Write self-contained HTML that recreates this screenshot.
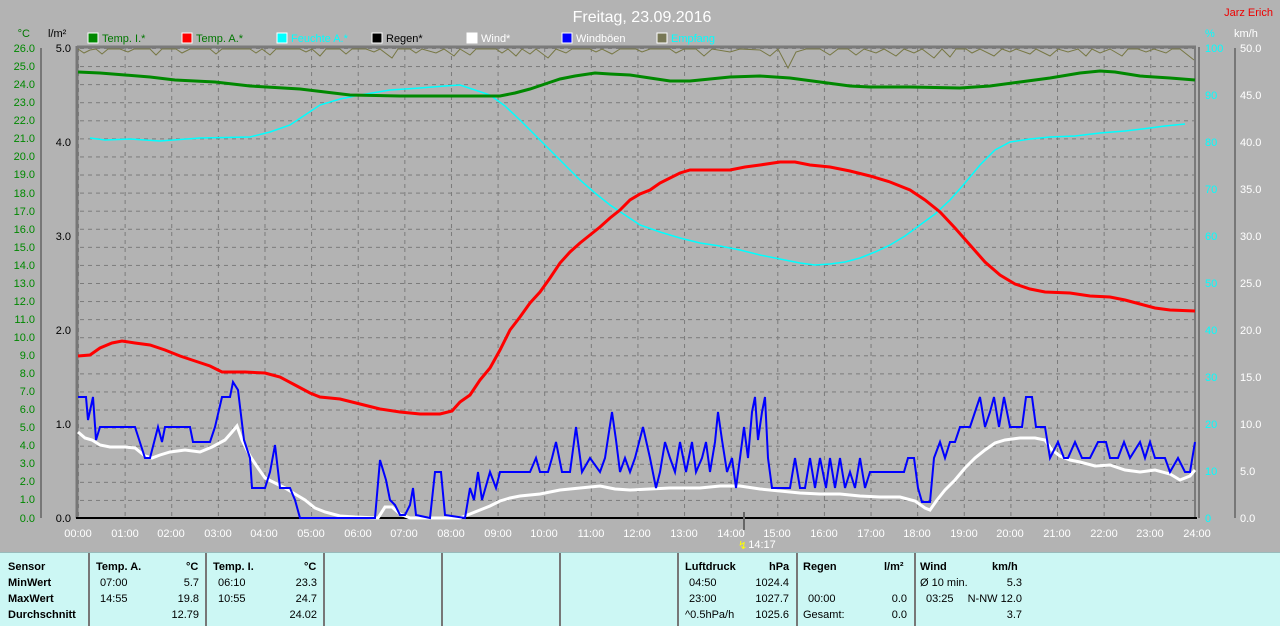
<!DOCTYPE html><html><head><meta charset="utf-8"><style>
body{margin:0;width:1280px;height:625px;background:#b3b3b3;overflow:hidden;font-family:"Liberation Sans",sans-serif;position:relative}
.t{position:absolute;white-space:nowrap}
#tab{position:absolute;left:0;top:552px;width:1280px;height:73px;background:#ccf7f4;border-top:1px solid #9bb;}
#tab .c{position:absolute;top:0;height:73px;border-left:2px solid #777}
#tab span{position:absolute;font-size:11px;color:#000;white-space:nowrap}
#tab b{font-weight:bold}
</style></head><body>
<svg width="1280" height="552" style="position:absolute;left:0;top:0" font-family="Liberation Sans, sans-serif">
<defs>
<pattern id="gh" x="0" y="48" width="1280" height="18.077" patternUnits="userSpaceOnUse"><line x1="0" y1="0.5" x2="1280" y2="0.5" stroke="#7a7a7a" stroke-dasharray="4,4"/></pattern>
<pattern id="gv" x="78" y="0" width="46.62" height="600" patternUnits="userSpaceOnUse"><line x1="0.5" y1="0" x2="0.5" y2="600" stroke="#7a7a7a" stroke-dasharray="4,4"/></pattern>
</defs>
<rect x="78" y="48" width="1117" height="470" fill="url(#gh)"/>
<rect x="78" y="48" width="1117" height="470" fill="url(#gv)"/>
<text x="642" y="22" fill="#fff" font-size="16" text-anchor="middle">Freitag, 23.09.2016</text>
<text x="1273" y="16" fill="#e00" font-size="11" text-anchor="end">Jarz Erich</text>
<g font-size="11">
<text x="30" y="37" fill="#070" text-anchor="end">°C</text>
<text x="48" y="37" fill="#000">l/m²</text>
<text x="1205" y="37" fill="#0ff">%</text>
<text x="1234" y="37" fill="#fff">km/h</text>
<rect x="88" y="33" width="10" height="10" fill="#080" stroke="#fff"/><text x="102" y="42" fill="#070">Temp. I.*</text>
<rect x="182" y="33" width="10" height="10" fill="#f00" stroke="#fff"/><text x="196" y="42" fill="#070">Temp. A.*</text>
<rect x="277" y="33" width="10" height="10" fill="#0ff" stroke="#fff"/><text x="291" y="42" fill="#0ff">Feuchte A.*</text>
<rect x="372" y="33" width="10" height="10" fill="#000" stroke="#fff"/><text x="386" y="42" fill="#000">Regen*</text>
<rect x="467" y="33" width="10" height="10" fill="#fff" stroke="#fff"/><text x="481" y="42" fill="#fff">Wind*</text>
<rect x="562" y="33" width="10" height="10" fill="#00f" stroke="#fff"/><text x="576" y="42" fill="#fff">Windböen</text>
<rect x="657" y="33" width="10" height="10" fill="#775" stroke="#fff"/><text x="671" y="42" fill="#0ff">Empfang</text>
</g>
<!-- left axes -->
<line x1="41" y1="48" x2="41" y2="518" stroke="#777" stroke-width="2"/>
<line x1="77" y1="46" x2="77" y2="518" stroke="#777" stroke-width="3"/>
<line x1="77" y1="47" x2="1196" y2="47" stroke="#7a7a7a" stroke-width="3"/>
<line x1="1195" y1="47" x2="1195" y2="518" stroke="#7a7a7a" stroke-width="2"/>
<line x1="1199" y1="47" x2="1199" y2="518" stroke="#777" stroke-width="2"/>
<line x1="1235" y1="48" x2="1235" y2="518" stroke="#777" stroke-width="2"/>
<line x1="76" y1="518" x2="1197" y2="518" stroke="#000" stroke-width="2"/>
<g font-size="11" fill="#080" text-anchor="end" id="la"></g>
<g font-size="11" fill="#080" text-anchor="end">
<text x="35" y="52">26.0</text><text x="35" y="70">25.0</text><text x="35" y="88">24.0</text><text x="35" y="106">23.0</text><text x="35" y="124">22.0</text><text x="35" y="142">21.0</text><text x="35" y="160">20.0</text><text x="35" y="178">19.0</text><text x="35" y="197">18.0</text><text x="35" y="215">17.0</text><text x="35" y="233">16.0</text><text x="35" y="251">15.0</text><text x="35" y="269">14.0</text><text x="35" y="287">13.0</text><text x="35" y="305">12.0</text><text x="35" y="323">11.0</text><text x="35" y="341">10.0</text><text x="35" y="359">9.0</text><text x="35" y="377">8.0</text><text x="35" y="395">7.0</text><text x="35" y="413">6.0</text><text x="35" y="431">5.0</text><text x="35" y="449">4.0</text><text x="35" y="467">3.0</text><text x="35" y="485">2.0</text><text x="35" y="503">1.0</text><text x="35" y="522">0.0</text>
</g>
<g font-size="11" fill="#000" text-anchor="end">
<text x="71" y="52">5.0</text><text x="71" y="146">4.0</text><text x="71" y="240">3.0</text><text x="71" y="334">2.0</text><text x="71" y="428">1.0</text><text x="71" y="522">0.0</text>
</g>
<g font-size="11" fill="#0ff"><text x="1205" y="52">100</text><text x="1205" y="99">90</text><text x="1205" y="146">80</text><text x="1205" y="193">70</text><text x="1205" y="240">60</text><text x="1205" y="287">50</text><text x="1205" y="334">40</text><text x="1205" y="381">30</text><text x="1205" y="428">20</text><text x="1205" y="475">10</text><text x="1205" y="522">0</text></g>
<g font-size="11" fill="#fff"><text x="1240" y="52">50.0</text><text x="1240" y="99">45.0</text><text x="1240" y="146">40.0</text><text x="1240" y="193">35.0</text><text x="1240" y="240">30.0</text><text x="1240" y="287">25.0</text><text x="1240" y="334">20.0</text><text x="1240" y="381">15.0</text><text x="1240" y="428">10.0</text><text x="1240" y="475">5.0</text><text x="1240" y="522">0.0</text></g>
<g font-size="11" fill="#fff" text-anchor="middle">
<text x="78" y="537">00:00</text><text x="125" y="537">01:00</text><text x="171" y="537">02:00</text><text x="218" y="537">03:00</text><text x="264" y="537">04:00</text><text x="311" y="537">05:00</text><text x="358" y="537">06:00</text><text x="404" y="537">07:00</text><text x="451" y="537">08:00</text><text x="498" y="537">09:00</text><text x="544" y="537">10:00</text><text x="591" y="537">11:00</text><text x="637" y="537">12:00</text><text x="684" y="537">13:00</text><text x="731" y="537">14:00</text><text x="777" y="537">15:00</text><text x="824" y="537">16:00</text><text x="871" y="537">17:00</text><text x="917" y="537">18:00</text><text x="964" y="537">19:00</text><text x="1010" y="537">20:00</text><text x="1057" y="537">21:00</text><text x="1104" y="537">22:00</text><text x="1150" y="537">23:00</text><text x="1197" y="537">24:00</text>
<text x="762" y="548">14:17</text></g>
<line x1="744" y1="512" x2="744" y2="530" stroke="#666" stroke-width="2"/>
<text x="738" y="549" fill="#ff0" font-size="11">↯</text>
<polyline fill="none" stroke="#777744" stroke-width="1" points="78,49 84,53 90,50 96,49 102,54 108,49 120,49 128,52 134,49 150,49 156,55 162,49 176,49 182,53 190,49 210,49 216,54 222,49 250,49 256,53 262,49 270,55 276,49 300,49 306,52 312,49 320,56 326,49 340,49 346,54 352,49 366,49 374,52 380,49 392,58 398,49 410,49 416,53 422,49 436,53 444,49 454,56 460,49 470,55 476,49 496,49 502,53 508,49 516,56 522,49 530,54 536,49 548,58 556,49 566,53 572,49 590,49 596,52 602,49 612,54 620,49 636,49 642,52 650,49 670,49 676,53 684,49 696,49 704,56 712,49 730,52 740,49 760,50 770,56 778,49 788,68 796,52 806,49 820,49 830,55 838,49 848,49 856,55 864,49 876,53 884,49 896,56 904,49 914,53 922,49 934,58 942,49 950,57 956,49 966,49 972,53 980,49 994,56 1002,49 1010,52 1016,49 1030,54 1036,49 1050,56 1058,49 1068,52 1078,49 1086,56 1092,49 1100,53 1110,49 1122,56 1128,49 1138,49 1146,52 1154,49 1166,53 1172,49 1180,49 1194,60"/>
<polyline fill="none" stroke="#0ff" stroke-width="1.5" points="90,138 105,140 130,139 160,141 200,138 250,137 270,132 290,125 305,115 320,105 340,99 360,95 390,90 420,88 445,86 460,85 475,90 490,95 505,106 520,120 535,135 550,150 565,165 580,180 595,193 610,205 625,215 640,225 660,232 680,238 700,243 720,246 740,250 760,255 780,259 800,263 815,265 830,264 845,262 860,258 875,252 890,245 905,236 920,225 935,214 950,200 965,183 980,165 995,150 1010,142 1030,139 1050,137 1075,136 1100,133 1125,131 1150,128 1165,126 1185,124"/>
<polyline fill="none" stroke="#080" stroke-width="3" points="78,72 100,73 125,75 150,77 175,80 215,82 250,86 300,89 350,95 400,96 470,96 500,96 515,93 530,89 545,84 560,79 575,76 595,73 610,74 630,75 650,78 670,81 690,81 710,79 730,77 760,76 790,78 820,82 850,86 870,87 910,87 960,88 990,86 1020,82 1050,78 1080,73 1100,71 1115,72 1140,76 1170,78 1195,80"/>
<polyline fill="none" stroke="#f00" stroke-width="3" points="78,356 90,355 100,348 112,343 122,341 135,343 150,345 165,350 180,356 195,361 210,366 222,372 245,372 265,373 280,377 295,385 310,393 320,397 340,399 360,404 380,409 400,412 420,414 440,414 452,411 460,402 470,395 480,380 490,368 500,350 510,330 520,317 530,303 540,292 550,278 560,263 570,252 580,243 590,235 600,227 610,218 620,210 630,200 640,194 650,190 660,183 670,178 680,173 690,170 710,170 730,170 745,167 760,165 780,162 795,162 810,165 830,167 850,171 870,176 890,182 910,190 925,200 940,212 955,228 970,245 985,262 1000,275 1015,284 1030,289 1045,292 1070,293 1090,296 1110,297 1125,300 1140,304 1155,308 1170,310 1195,311"/>
<polyline fill="none" stroke="#fff" stroke-width="3" points="78,432 85,438 92,440 100,445 110,447 125,447 135,448 145,456 152,458 160,455 170,452 185,450 200,452 212,447 225,440 232,432 237,426 242,440 250,456 258,468 265,478 275,483 285,488 295,494 305,500 315,508 325,512 340,516 355,517 378,518 385,507 392,507 400,514 410,518 460,518 470,514 480,510 490,506 500,501 510,498 520,496 540,494 560,490 580,488 600,486 615,489 630,490 650,489 670,488 700,488 720,486 740,486 760,489 780,491 800,493 820,494 840,494 860,496 880,497 900,497 915,501 925,508 930,510 937,500 945,490 955,480 965,468 975,458 985,450 995,443 1005,440 1020,438 1035,438 1045,440 1052,450 1060,456 1070,460 1080,462 1095,466 1110,465 1125,470 1140,472 1155,470 1170,474 1180,480 1190,476 1195,470"/>
<polyline fill="none" stroke="#00f" stroke-width="2" points="78,397 86,397 88,420 93,397 96,440 100,427 108,427 135,427 145,458 150,458 158,427 162,442 165,427 190,427 193,442 210,442 215,427 222,397 230,397 233,382 238,390 244,440 250,458 252,488 265,488 270,472 275,445 280,488 290,488 295,500 300,518 375,518 380,460 386,480 390,500 395,505 400,515 405,515 410,505 413,488 416,515 430,518 435,472 441,472 445,515 465,518 470,488 474,500 478,472 482,500 490,472 496,488 500,472 530,472 536,458 540,472 548,472 552,458 556,442 562,472 570,472 576,427 582,472 590,458 600,472 605,458 612,412 616,440 620,472 625,458 630,472 635,458 643,427 650,458 656,488 660,472 665,442 670,458 675,472 680,442 686,472 692,442 696,472 702,458 706,442 710,472 715,442 718,412 722,440 727,472 732,458 736,488 740,458 744,427 748,458 752,412 755,397 758,440 762,412 765,397 768,458 772,488 790,488 795,458 800,488 805,488 810,458 815,488 820,458 826,488 830,458 835,488 840,458 845,488 850,472 855,488 860,458 865,488 870,472 880,472 904,472 908,458 914,458 918,488 922,502 930,502 934,458 940,442 945,458 950,442 955,442 960,427 970,427 975,412 980,397 985,427 990,412 994,397 999,427 1004,397 1010,427 1015,427 1022,427 1026,397 1032,397 1036,427 1045,427 1050,458 1058,442 1064,458 1068,458 1075,442 1082,458 1090,458 1098,442 1106,442 1110,458 1118,458 1124,442 1130,458 1140,442 1145,458 1150,442 1155,458 1165,458 1170,472 1178,458 1185,472 1190,472 1195,442"/>
</svg>
<div id="tab">
<div class="c" style="left:88px"></div><div class="c" style="left:205px"></div><div class="c" style="left:323px"></div><div class="c" style="left:441px"></div><div class="c" style="left:559px"></div><div class="c" style="left:677px"></div><div class="c" style="left:796px"></div><div class="c" style="left:914px"></div>
<span style="left:8px;top:8px"><b>Sensor</b></span><span style="left:8px;top:24px"><b>MinWert</b></span><span style="left:8px;top:40px"><b>MaxWert</b></span><span style="left:8px;top:56px"><b>Durchschnitt</b></span>
<span style="left:96px;top:8px"><b>Temp. A.</b></span><span style="left:186px;top:8px"><b>°C</b></span>
<span style="left:100px;top:24px">07:00</span><span style="right:1081px;top:24px">5.7</span>
<span style="left:100px;top:40px">14:55</span><span style="right:1081px;top:40px">19.8</span>
<span style="right:1081px;top:56px">12.79</span>
<span style="left:213px;top:8px"><b>Temp. I.</b></span><span style="left:304px;top:8px"><b>°C</b></span>
<span style="left:218px;top:24px">06:10</span><span style="right:963px;top:24px">23.3</span>
<span style="left:218px;top:40px">10:55</span><span style="right:963px;top:40px">24.7</span>
<span style="right:963px;top:56px">24.02</span>
<span style="left:685px;top:8px"><b>Luftdruck</b></span><span style="left:769px;top:8px"><b>hPa</b></span>
<span style="left:689px;top:24px">04:50</span><span style="right:491px;top:24px">1024.4</span>
<span style="left:689px;top:40px">23:00</span><span style="right:491px;top:40px">1027.7</span>
<span style="left:685px;top:56px">^0.5hPa/h</span><span style="right:491px;top:56px">1025.6</span>
<span style="left:803px;top:8px"><b>Regen</b></span><span style="left:884px;top:8px"><b>l/m²</b></span>
<span style="left:808px;top:40px">00:00</span><span style="right:373px;top:40px">0.0</span>
<span style="left:803px;top:56px">Gesamt:</span><span style="right:373px;top:56px">0.0</span>
<span style="left:920px;top:8px"><b>Wind</b></span><span style="left:992px;top:8px"><b>km/h</b></span>
<span style="left:920px;top:24px">Ø 10 min.</span><span style="right:258px;top:24px">5.3</span>
<span style="left:926px;top:40px">03:25</span><span style="right:258px;top:40px">N-NW 12.0</span>
<span style="right:258px;top:56px">3.7</span>
</div>
</body></html>
